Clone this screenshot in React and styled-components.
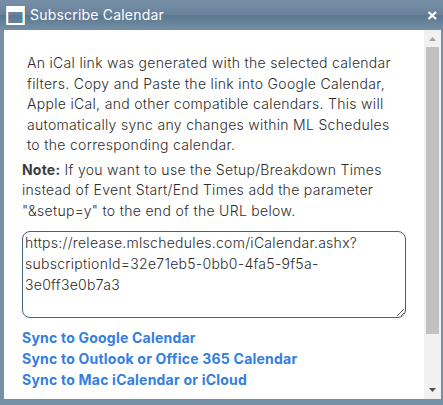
import React from "react";
import styled, { createGlobalStyle } from "styled-components";

const GlobalStyle = createGlobalStyle`
  * { box-sizing: border-box; }
  body { margin: 0; font-family: Inter, sans-serif; }
`;

const Dialog = styled.section`
  width: 443px;
  height: 405px;
  display: flex;
  flex-direction: column;
  padding: 0 2px 6px 4px;
  background: #758fa5;
  overflow: hidden;
`;

const TitleBar = styled.header`
  flex: 0 0 30px;
  margin: 0 -2px 0 -4px;
  padding: 0 5px 0 6px;
  display: flex;
  align-items: center;
  gap: 5px;
  background: linear-gradient(#768fa7 0, #6b819b 15px, #597790 15px, #758fa5 30px);
`;

const Title = styled.h1`
  flex: 1;
  margin: 0;
  color: #fff;
  font-size: 14px;
  font-weight: 400;
  line-height: 30px;
  letter-spacing: 0.2px;
  white-space: nowrap;
`;

const CloseButton = styled.button`
  display: flex;
  padding: 0;
  border: 0;
  background: none;
`;

const Body = styled.div`
  flex: 1;
  min-height: 0;
  display: flex;
  background: #fff;
`;

const Content = styled.main`
  flex: 1;
  padding: 23px 18px 0;
  color: #2d2d2d;
  font-size: 14px;
  font-weight: 300;
  letter-spacing: 0.31px;
  line-height: 20.5px;
`;

const Text = styled.p`
  margin: 0;
  padding-left: ${(p) => (p.$indent ? "5px" : "0")};
  padding-top: ${(p) => (p.$indent ? "0" : "4px")};
  white-space: nowrap;
`;

const Label = styled.strong`
  color: #3c3c3c;
  font-weight: 700;
  letter-spacing: 0.2px;
`;

const LinkField = styled.textarea`
  display: block;
  width: 384px;
  height: 87px;
  margin: 10px 0 9px;
  padding: 0 2px 2px;
  border: 1px solid #42647a;
  border-radius: 8px;
  outline: 0;
  overflow: hidden;
  resize: both;
  color: #2d2d2d;
  font: 300 14px/21px Inter, sans-serif;
  letter-spacing: 0.28px;
`;

const SyncLinks = styled.nav`
  display: flex;
  flex-direction: column;
  align-items: flex-start;
`;

const SyncLink = styled.a`
  color: #337ee0;
  font-weight: 700;
  line-height: 21px;
  letter-spacing: 0.22px;
  text-decoration: none;
  white-space: nowrap;
`;

const Scrollbar = styled.div`
  flex: 0 0 17px;
  display: flex;
  flex-direction: column;
  align-items: center;
  background: #f1f1f1;
`;

const Arrow = styled.svg`
  display: block;
  width: 17px;
  height: 17px;
  fill: ${(p) => p.$color};
`;

const Thumb = styled.div`
  width: 13px;
  height: 287px;
  margin-bottom: auto;
  background: #c1c1c1;
`;

export default function App() {
  return (
    <>
      <GlobalStyle />
      <Dialog>
        <TitleBar>
          <svg width="19" height="19" viewBox="0 0 19 19">
            <path fill="#fff" fillRule="evenodd" d="M0 0H19V19H0ZM2 6V17H17V6Z" />
            <path fill="#b98b9d" d="M2 6h1v11H2z" />
            <path fill="#7bc6dc" d="M16 6h1v11h-1z" />
            <path fill="#ffe6bd" d="M18 0h1v19h-1z" />
            <path fill="#d4eef5" d="M0 0h1v19H0z" />
          </svg>
          <Title>Subscribe Calendar</Title>
          <CloseButton aria-label="Close">
            <svg width="11" height="11" viewBox="0 0 11 11">
              <path d="M1.5 2 9 9M9 2 1.5 9" stroke="#fff" strokeWidth="2.2" />
            </svg>
          </CloseButton>
        </TitleBar>
        <Body>
          <Content>
            <Text $indent>
              An iCal link was generated with the selected calendar<br />
              filters. Copy and Paste the link into Google Calendar,<br />
              Apple iCal, and other compatible calendars. This will<br />
              automatically sync any changes within ML Schedules<br />
              to the corresponding calendar.
            </Text>
            <Text>
              <Label>Note:</Label> If you want to use the Setup/Breakdown Times<br />
              instead of Event Start/End Times add the parameter<br />
              "&amp;setup=y" to the end of the URL below.
            </Text>
            <LinkField
              readOnly
              spellCheck={false}
              value="https://release.mlschedules.com/iCalendar.ashx?subscriptionId=32e71eb5-0bb0-4fa5-9f5a-3e0ff3e0b7a3"
            />
            <SyncLinks>
              <SyncLink href="#">Sync to Google Calendar</SyncLink>
              <SyncLink href="#">Sync to Outlook or Office 365 Calendar</SyncLink>
              <SyncLink href="#">Sync to Mac iCalendar or iCloud</SyncLink>
            </SyncLinks>
          </Content>
          <Scrollbar>
            <Arrow $color="#a3a3a3" viewBox="0 0 17 17"><path d="M5 11h7L8.5 7z" /></Arrow>
            <Thumb />
            <Arrow $color="#505050" viewBox="0 0 17 17"><path d="M5 6h7L8.5 10z" /></Arrow>
          </Scrollbar>
        </Body>
      </Dialog>
    </>
  );
}
